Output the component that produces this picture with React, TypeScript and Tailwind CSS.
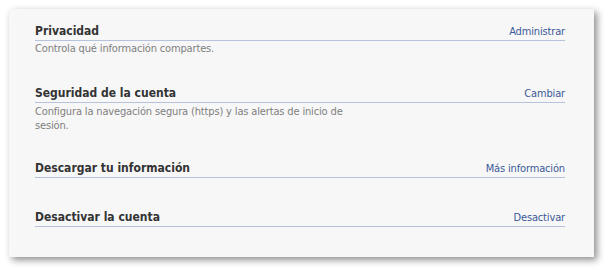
export default function App() {
  const font = { fontFamily: "Tahoma, 'DejaVu Sans Condensed', 'Liberation Sans', sans-serif" };
  const head = "text-[12px] leading-[16px] font-bold text-[#333333]";
  const link = "text-[11px] leading-[14px] text-[#3b5998] tracking-[-0.15px]";
  const desc = "text-[11px] leading-[14px] text-[#808080] tracking-[-0.15px]";
  const row = "flex items-end justify-between border-b border-[#b7c3dc] h-[17px] pb-[1px]";
  return (
    <div className="w-[608px] h-[272px] bg-white pt-[9px] pl-[9px]" style={font}>
      <div className="w-[585px] h-[248px] bg-[#f7f7f7] shadow-[3px_3px_7px_rgba(0,0,0,0.45)] pl-[26px] pr-[29px] pt-[15px]">
        <div className={row}>
          <span className={head}>Privacidad</span>
          <span className={link}>Administrar</span>
        </div>
        <div className={`${desc} mt-[1px]`}>Controla qué información compartes.</div>

        <div className={`${row} mt-[30px]`}>
          <span className={head}>Seguridad de la cuenta</span>
          <span className={link}>Cambiar</span>
        </div>
        <div className={`${desc} mt-[2px]`}>
          Configura la navegación segura (https) y las alertas de inicio de
          <br />
          sesión.
        </div>

        <div className={`${row} mt-[28px]`}>
          <span className={head}>Descargar tu información</span>
          <span className={link}>Más información</span>
        </div>

        <div className={`${row} mt-[32px]`}>
          <span className={head}>Desactivar la cuenta</span>
          <span className={link}>Desactivar</span>
        </div>
      </div>
    </div>
  );
}
